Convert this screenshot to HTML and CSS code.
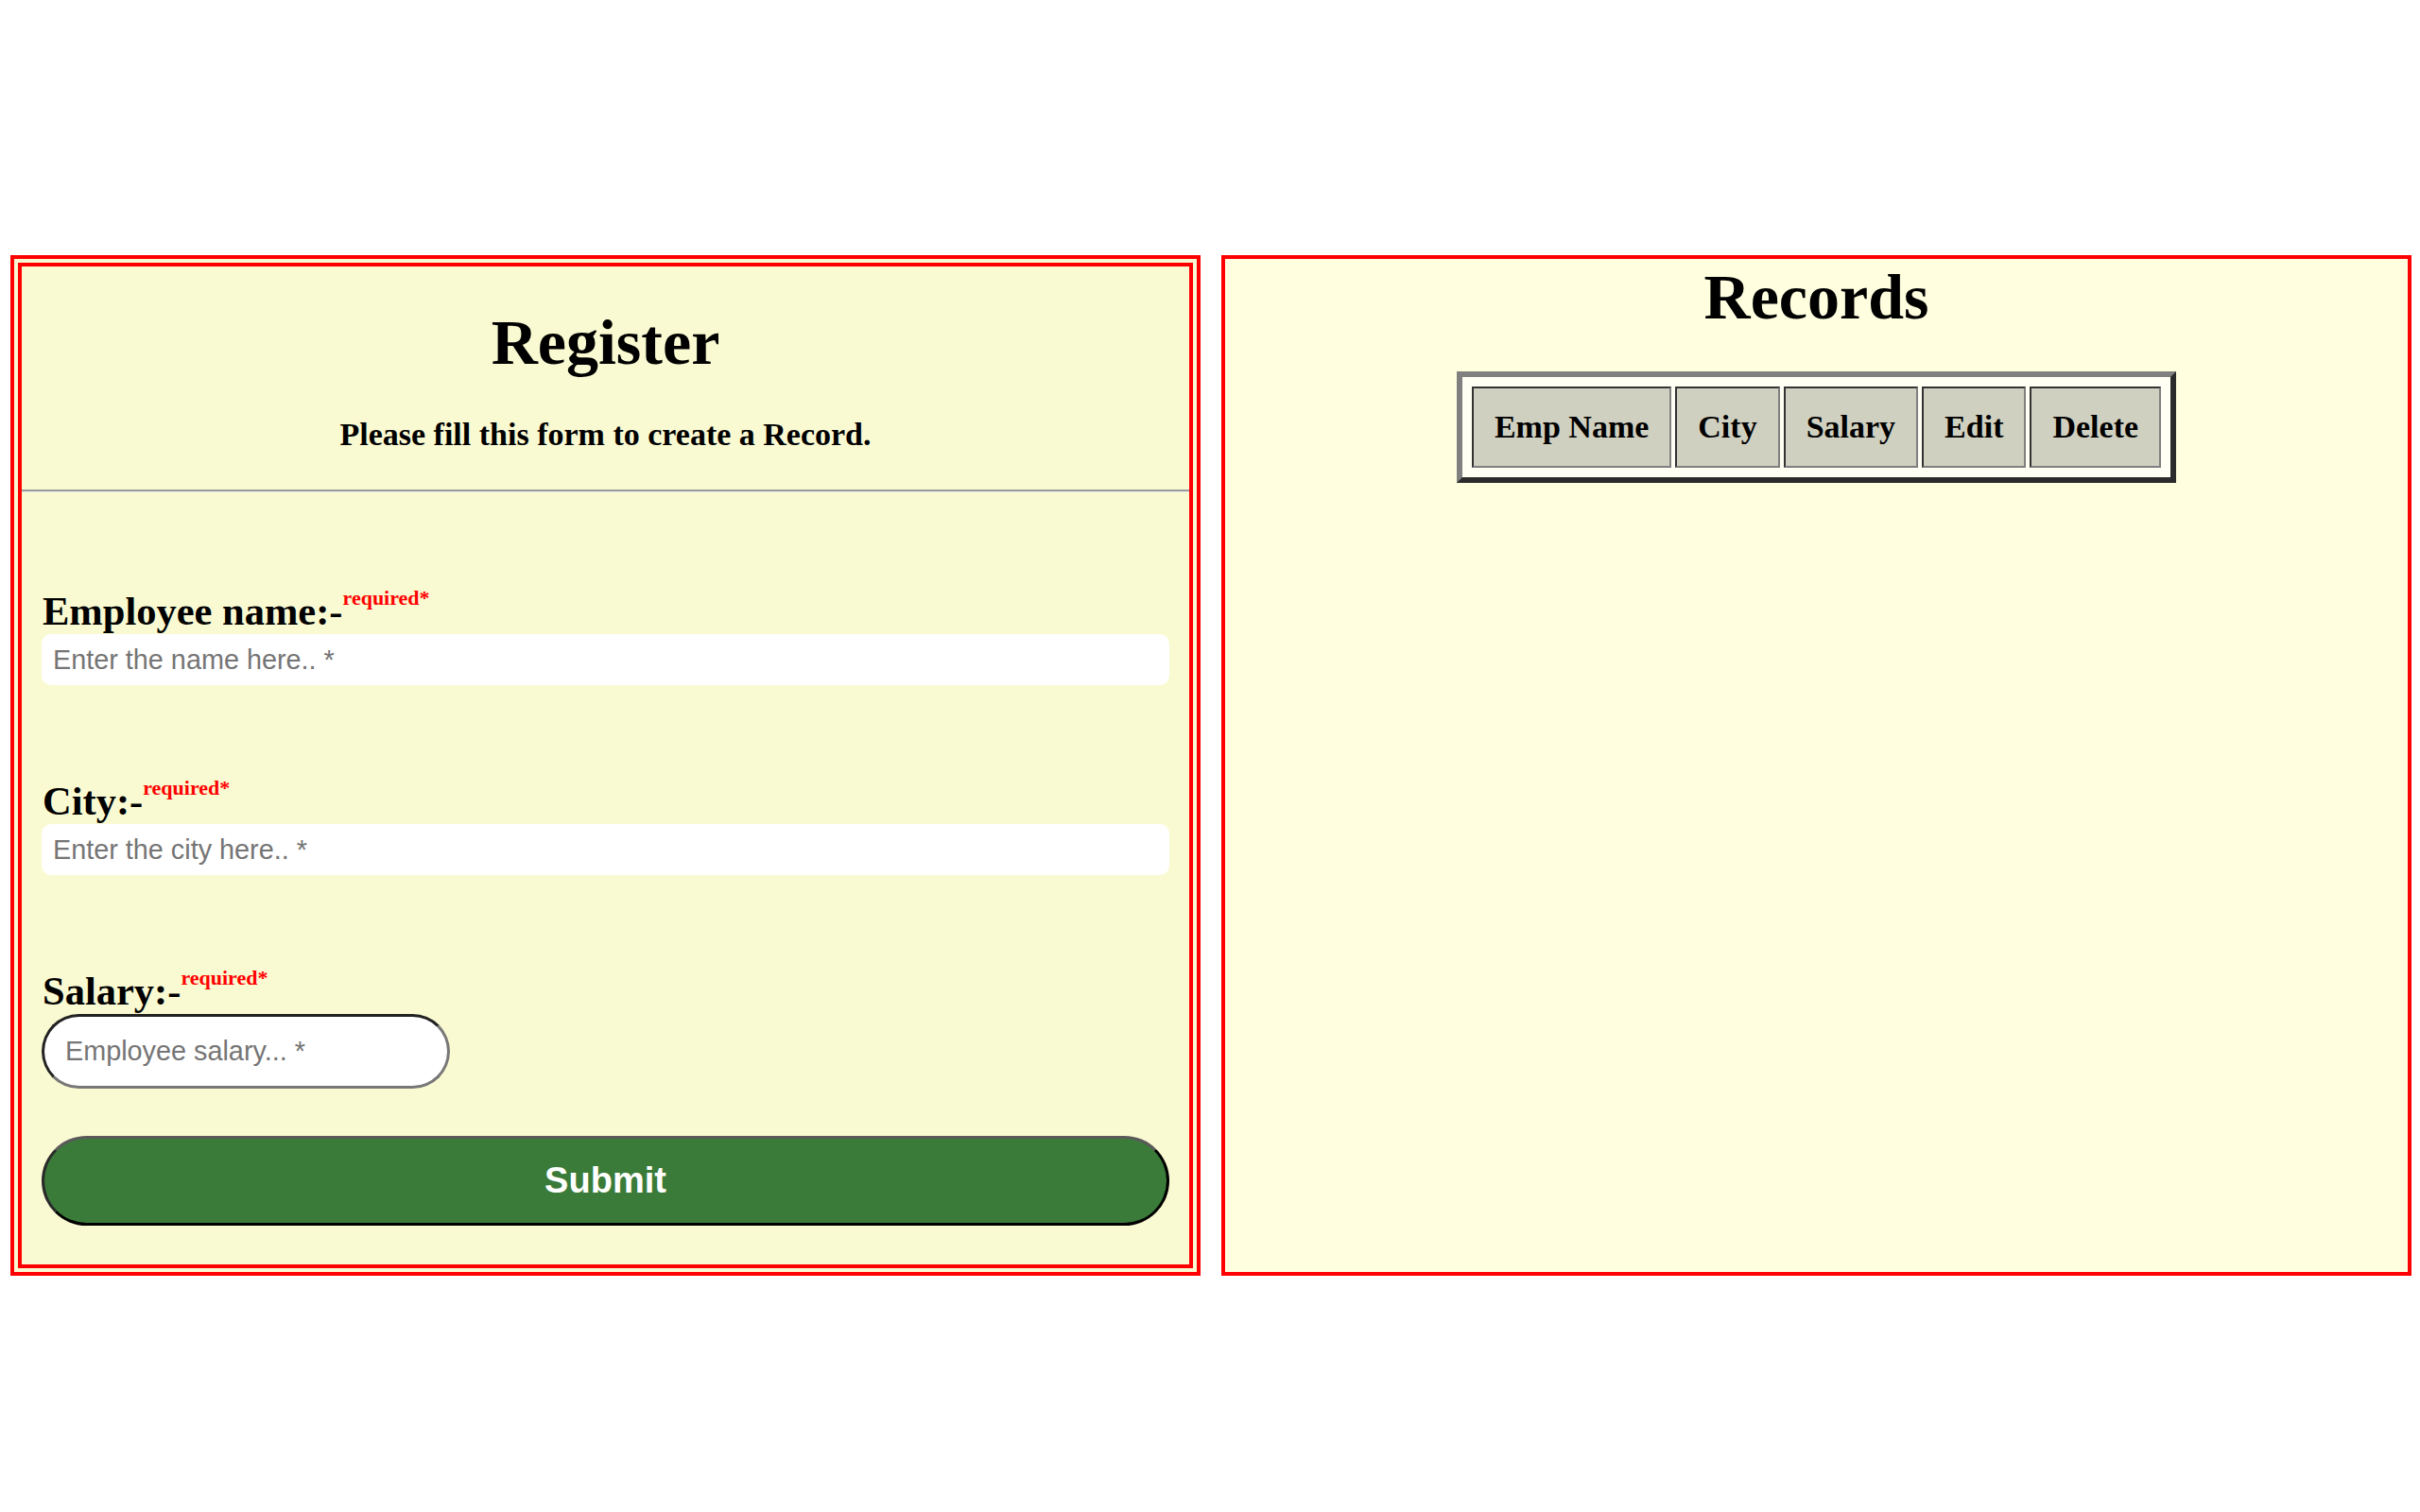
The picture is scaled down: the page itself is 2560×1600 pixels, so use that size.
FILE: index.html
```html
<!DOCTYPE html>
<html lang="en">
<head>
<meta charset="utf-8">
<title>Employee Records</title>
<link rel="stylesheet" href="styles.css">
</head>
<body>
<div class="panels">
  <section class="panel panel-register">
    <h1 class="title title-register">Register</h1>
    <p class="subtitle">Please fill this form to create a Record.</p>
    <hr class="divider">
    <form class="form">
      <div class="group group-first">
        <label class="label" for="name">Employee name:-<sup class="req">required*</sup></label>
        <input class="field" id="name" type="text" placeholder="Enter the name here.. *">
      </div>
      <div class="group">
        <label class="label" for="city">City:-<sup class="req">required*</sup></label>
        <input class="field" id="city" type="text" placeholder="Enter the city here.. *">
      </div>
      <div class="group">
        <label class="label" for="salary">Salary:-<sup class="req">required*</sup></label>
        <input class="field-salary" id="salary" type="text" placeholder="Employee salary... *">
      </div>
      <button class="submit" type="button">Submit</button>
    </form>
  </section>
  <section class="panel panel-records">
    <h1 class="title title-records">Records</h1>
    <table class="records">
      <thead>
        <tr>
          <th>Emp Name</th>
          <th>City</th>
          <th>Salary</th>
          <th>Edit</th>
          <th>Delete</th>
        </tr>
      </thead>
    </table>
  </section>
</div>
</body>
</html>
```
FILE: styles.css
```css
html, body {
  margin: 0;
  padding: 0;
  background: #ffffff;
}

body {
  font-family: "Liberation Serif", "Times New Roman", serif;
  color: #000;
}

.panels {
  display: flex;
  gap: 22px;
  padding: 270px 9px 0 11px;
}

.panel {
  flex: 0 0 calc((100% - 22px) / 2);
  min-width: 0;
  height: 1080px;
  box-sizing: border-box;
}

.panel-register {
  border: 12px double #ff0000;
  background: #fafad2;
}

.panel-records {
  border: 4px solid #ff0000;
  background: #ffffe0;
}

.title {
  font-size: 68px;
  line-height: 78px;
  font-weight: bold;
  text-align: center;
  margin: 0;
}

.title-register {
  margin-top: 41px;
}

.title-records {
  margin-top: 1px;
}

.subtitle {
  font-size: 34px;
  line-height: 39px;
  font-weight: bold;
  text-align: center;
  margin: 39px 0 39px;
}

.divider {
  margin: 0;
  height: 0;
  border: 0;
  border-top: 2px solid #9b9b9b;
  border-bottom: 1px solid #ececec;
}

.form {
  padding: 0 21px;
  margin: 0;
}

.group {
  margin-top: 99px;
}

.group-first {
  margin-top: 102px;
}

.label {
  display: block;
  font-size: 42.5px;
  line-height: 48px;
  font-weight: bold;
  padding-left: 1px;
}

.req {
  font-size: 22px;
  line-height: 0;
  color: #ff0000;
  vertical-align: 21px;
}

.field {
  display: block;
  box-sizing: border-box;
  width: 100%;
  height: 54px;
  margin: 0;
  border: none;
  border-radius: 10px;
  background: #ffffff;
  padding: 0 12px;
  font-family: "Liberation Sans", Arial, sans-serif;
  font-size: 28.8px;
  color: #333;
  outline: none;
}

.field-salary {
  display: block;
  box-sizing: border-box;
  width: 432px;
  height: 79px;
  margin: 0;
  border: 3px solid;
  border-color: #222222 #777777 #777777 #222222;
  border-radius: 40px;
  background: #ffffff;
  padding: 0 22px;
  font-family: "Liberation Sans", Arial, sans-serif;
  font-size: 28.8px;
  color: #333;
  outline: none;
}

.field::placeholder,
.field-salary::placeholder {
  color: #757575;
}

.submit {
  display: block;
  box-sizing: border-box;
  width: 100%;
  height: 95px;
  margin: 50px 0 0;
  border: 3px solid;
  border-color: #5a5a5a #000000 #000000 #2a2a2a;
  border-radius: 48px;
  background: #3a7b39;
  color: #ffffff;
  font-family: "Liberation Sans", Arial, sans-serif;
  font-size: 38px;
  font-weight: bold;
  cursor: pointer;
}

.records {
  margin: 40px auto 0;
  border: 6px solid;
  border-color: #808080 #2b2b2b #2b2b2b #808080;
  border-spacing: 4px;
  padding: 6px;
  background: #fffff4;
}

.records th {
  background: #d0d0c0;
  border: 2px solid;
  border-color: #333333 #808080 #808080 #333333;
  padding: 21px 22px;
  font-size: 34px;
  line-height: 40px;
  font-weight: bold;
  white-space: nowrap;
}
```
